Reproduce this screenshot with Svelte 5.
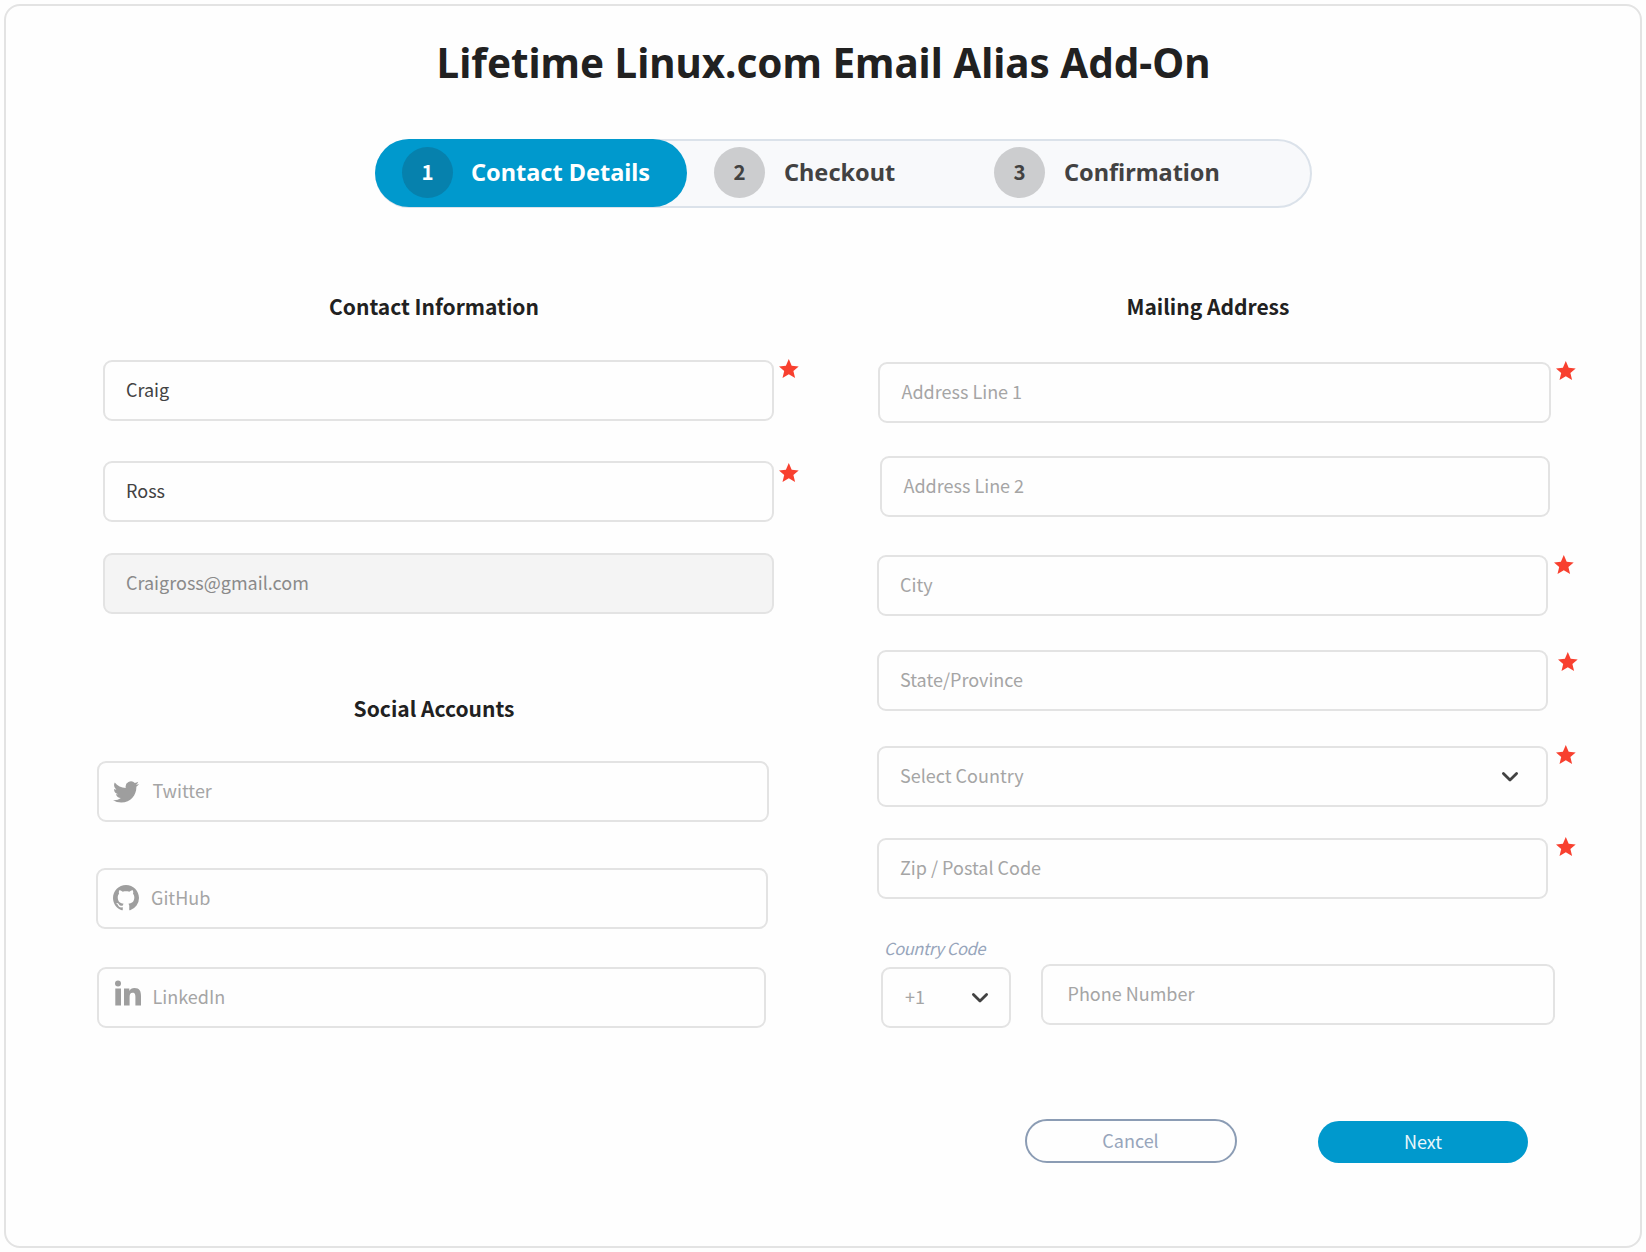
<script>
  const steps = ['Contact Details', 'Checkout', 'Confirmation'];

  const contact = [
    { id: 'first', text: 'Craig', tone: 'filled', required: true },
    { id: 'last', text: 'Ross', tone: 'filled', required: true },
    { id: 'email', text: 'Craigross@gmail.com', tone: 'disabled' },
  ];
  const social = [
    { id: 'twitter', text: 'Twitter', icon: 'twitter' },
    { id: 'github', text: 'GitHub', icon: 'github' },
    { id: 'linkedin', text: 'LinkedIn', icon: 'linkedin' },
  ];
  const mailing = [
    { id: 'line1', text: 'Address Line 1', required: true },
    { id: 'line2', text: 'Address Line 2' },
    { id: 'city', text: 'City', required: true },
    { id: 'state', text: 'State/Province', required: true },
    { id: 'country', text: 'Select Country', required: true, select: true },
    { id: 'zip', text: 'Zip / Postal Code', required: true },
  ];
</script>

{#snippet star()}
  <svg class="star" viewBox="0 0 20 19"><path d="M9.800 0l2.900 6.700 7 .7-5.300 4.600 1.700 7-6.300-3.800L3.500 19l1.700-7L0 7.400l6.900-.7z" /></svg>
{/snippet}

{#snippet chevron()}
  <svg class="chevron" viewBox="0 0 18 12"><path d="M2.400 2.400 9 9l6.600-6.600" /></svg>
{/snippet}

{#snippet logo(name)}
  {#if name === 'twitter'}
    <svg class="logo" viewBox="0 0 24 24"><path d="M23.954 4.569a10 10 0 0 1-2.825.775 4.958 4.958 0 0 0 2.163-2.723 9.99 9.99 0 0 1-3.127 1.184 4.92 4.92 0 0 0-8.384 4.482C7.691 8.094 4.066 6.13 1.64 3.161a4.822 4.822 0 0 0-.666 2.475c0 1.71.87 3.213 2.188 4.096a4.904 4.904 0 0 1-2.228-.616v.061a4.923 4.923 0 0 0 3.946 4.827 4.996 4.996 0 0 1-2.212.085 4.937 4.937 0 0 0 4.604 3.417 9.868 9.868 0 0 1-6.102 2.105c-.39 0-.779-.023-1.17-.067a13.995 13.995 0 0 0 7.557 2.209c9.054 0 13.999-7.496 13.999-13.986 0-.209 0-.42-.015-.63a9.936 9.936 0 0 0 2.46-2.548l-.047-.02z" /></svg>
  {:else if name === 'github'}
    <svg class="logo" viewBox="0 0 16 16"><path d="M8 0C3.58 0 0 3.58 0 8c0 3.54 2.29 6.53 5.47 7.59.4.07.55-.17.55-.38 0-.19-.01-.82-.01-1.49-2.01.37-2.53-.49-2.69-.94-.09-.23-.48-.94-.82-1.13-.28-.15-.68-.52-.01-.53.63-.01 1.08.58 1.23.82.72 1.21 1.87.87 2.33.66.07-.52.28-.87.51-1.07-1.78-.2-3.64-.89-3.64-3.95 0-.87.31-1.59.82-2.15-.08-.2-.36-1.02.08-2.12 0 0 .67-.21 2.2.82.64-.18 1.32-.27 2-.27s1.36.09 2 .27c1.53-1.04 2.2-.82 2.2-.82.44 1.1.16 1.92.08 2.12.51.56.82 1.27.82 2.15 0 3.07-1.87 3.75-3.65 3.95.29.25.54.73.54 1.48 0 1.07-.01 1.93-.01 2.2 0 .21.15.46.55.38A8.01 8.01 0 0 0 16 8c0-4.42-3.58-8-8-8z" /></svg>
  {:else}
    <svg class="logo" viewBox="0 0 26 25"><circle cx="3" cy="3" r="3" /><path d="M.3 8h5.700v17H.3zM9 8h5.300v2.400C15.200 8.700 17 7.600 19.400 7.600c5.300 0 6.600 3.200 6.600 8V25h-5.600v-8.500c0-2.200-.3-4.300-2.800-4.300s-3 2-3 4.300V25H9z" /></svg>
  {/if}
{/snippet}

{#snippet field(f)}
  <div class="row {f.id}">
    <div class="box {f.tone ?? ''}">
      {#if f.icon}{@render logo(f.icon)}{/if}
      <span>{f.text}</span>
      {#if f.select}{@render chevron()}{/if}
    </div>
    {#if f.required}{@render star()}{/if}
  </div>
{/snippet}

<main>
  <h1>Lifetime Linux.com Email Alias Add-On</h1>

  <ol class="steps">
    {#each steps as step, i}
      <li class:active={i === 0}>
        <span class="num">{i + 1}</span>
        <span class="label">{step}</span>
      </li>
    {/each}
  </ol>

  <div class="columns">
    <section class="left">
      <h2>Contact Information</h2>
      {#each contact as f}{@render field(f)}{/each}
      <h2 class="second">Social Accounts</h2>
      {#each social as f}{@render field(f)}{/each}
    </section>

    <section class="right">
      <h2>Mailing Address</h2>
      {#each mailing as f}{@render field(f)}{/each}
      <div class="phone-row">
        <div class="code">
          <em>Country Code</em>
          <div class="box"><span>+1</span>{@render chevron()}</div>
        </div>
        <div class="box phone"><span>Phone Number</span></div>
      </div>
      <div class="actions">
        <button class="cancel">Cancel</button>
        <button class="next">Next</button>
      </div>
    </section>
  </div>
</main>

<style>
  :global(body) {
    background: #fefefe;
  }
  main {
    box-sizing: border-box;
    width: 1638px;
    height: 1244px;
    margin: 4px;
    border: 2px solid #e3e3e3;
    border-radius: 16px;
    font-family: 'Noto Sans CJK SC', sans-serif;
    font-size: 18px;
    color: #212121;
  }
  h1 {
    margin: 29px 0 0;
    padding-left: 1px;
    font: 700 40.4px/56px 'Noto Sans', sans-serif;
    text-align: center;
    white-space: nowrap;
  }
  .steps {
    box-sizing: border-box;
    display: flex;
    width: 937px;
    height: 69px;
    margin: 48px 0 0 369px;
    padding: 0;
    list-style: none;
    border: 2px solid #dbe2ea;
    border-radius: 35px;
    background: #f8f9fb;
    color: #424242;
  }
  .steps li {
    box-sizing: border-box;
    display: flex;
    align-items: center;
    gap: 19px;
    height: 68px;
    margin-top: -2px;
    padding-left: 27px;
    white-space: nowrap;
  }
  .steps li:nth-child(2) {
    width: 280px;
  }
  .label {
    padding-bottom: 2px;
    font: 700 23.5px/32px 'Noto Sans', sans-serif;
  }
  .num {
    width: 51px;
    height: 51px;
    margin-bottom: 1px;
    border-radius: 50%;
    background: #cccdcf;
    font-size: 20.5px;
    font-weight: 700;
    line-height: 49px;
    text-align: center;
  }
  .steps .active {
    width: 312px;
    margin-left: -2px;
    border-radius: 34px;
    background: #0099cd;
    color: #fff;
  }
  .active .num {
    margin-right: -1px;
    background: #0681ad;
  }
  .columns {
    display: grid;
    grid-template-columns: 774px 1fr;
  }
  h2 {
    margin: 82px 0 0;
    font-size: 21px;
    line-height: 32px;
    font-weight: 700;
    white-space: nowrap;
  }
  .left h2 {
    width: 856px;
    text-align: center;
  }
  .right h2 {
    margin-left: 346.5px;
  }
  .left .second {
    margin: 78px 0 37px;
  }
  .row {
    display: flex;
    align-items: flex-start;
    height: 61px;
  }
  .box {
    box-sizing: border-box;
    display: flex;
    flex: none;
    align-items: center;
    width: 671px;
    height: 61px;
    padding: 0 22px 3px 21px;
    border: 2px solid #e3e3e3;
    border-radius: 9px;
    line-height: 26px;
    white-space: nowrap;
    color: #a5a5a5;
  }
  .filled {
    color: #424242;
  }
  .disabled {
    background: #f4f4f4;
    color: #8a8a8a;
  }

  .star {
    flex: none;
    width: 20px;
    height: 19px;
    margin-left: 5px;
    margin-top: -1px;
    fill: #f8402f;
  }
  .logo {
    flex: none;
    width: 26px;
    height: 26px;
    fill: #9e9e9e;
  }
  .chevron {
    width: 18px;
    height: 12px;
    margin: 3px 5px 0 auto;
    fill: none;
    stroke: #424242;
    stroke-width: 2.8;
    stroke-linecap: round;
    stroke-linejoin: round;
  }

  .first { margin: 38px 0 0 97px; }
  .last { margin: 40px 0 0 97px; }
  .last .star { margin-top: 2px; }
  .email { margin: 31px 0 0 97px; }

  .twitter { margin: 0 0 0 91px; }
  .twitter .box { width: 672px; padding-left: 14px; }
  .twitter .logo { margin: 4px 13.5px 0 0; }
  .github { margin: 46px 0 0 90px; }
  .github .box { width: 672px; padding-left: 15px; }
  .github .logo { margin: 1px 12px 0 0; }
  .linkedin { margin: 38px 0 0 91px; }
  .linkedin .box { width: 669px; padding-left: 16px; }
  .linkedin .logo { margin: 0 11.5px 7px 0; }

  .line1 { margin: 40px 0 0 98px; }
  .line1 .box { width: 673px; padding-left: 21.5px; }
  .line2 { margin: 33px 0 0 100px; }
  .line2 .box { width: 670px; padding-left: 21.5px; }
  .city { margin: 38px 0 0 97px; }
  .city .star { margin: 0 0 0 6px; }
  .state { margin: 34px 0 0 97px; }
  .state .star { margin: 2px 0 0 10px; }
  .country { margin: 35px 0 0 97px; }
  .zip { margin: 31px 0 0 97px; }
  .country .star,
  .zip .star { margin-left: 8px; }

  .phone-row {
    display: flex;
    align-items: flex-end;
    gap: 30px;
    margin: 36px 0 0 101px;
  }
  .code .box {
    width: 130px;
    padding-left: 22px;
  }
  .code .chevron {
    margin-right: -2px;
  }
  em {
    display: block;
    margin-bottom: 6px;
    padding-left: 3px;
    font-size: 16.5px;
    line-height: 26px;
    letter-spacing: -0.4px;
    color: #97a5bb;
  }
  .phone {
    width: 514px;
    margin-bottom: 3px;
    padding-left: 24.5px;
  }
  .actions {
    display: flex;
    gap: 81px;
    margin: 91px 0 0 245px;
  }
  button {
    box-sizing: border-box;
    width: 212px;
    height: 44px;
    padding: 0 1px 3px 0;
    border: 2px solid #8b9cb4;
    border-radius: 22px;
    background: none;
    font: inherit;
    color: #97a5bb;
  }
  .next {
    width: 210px;
    height: 42px;
    margin-top: 2px;
    padding: 0 0 2px;
    border: 0;
    background: #0099cd;
    color: #e9f6fb;
  }
</style>
